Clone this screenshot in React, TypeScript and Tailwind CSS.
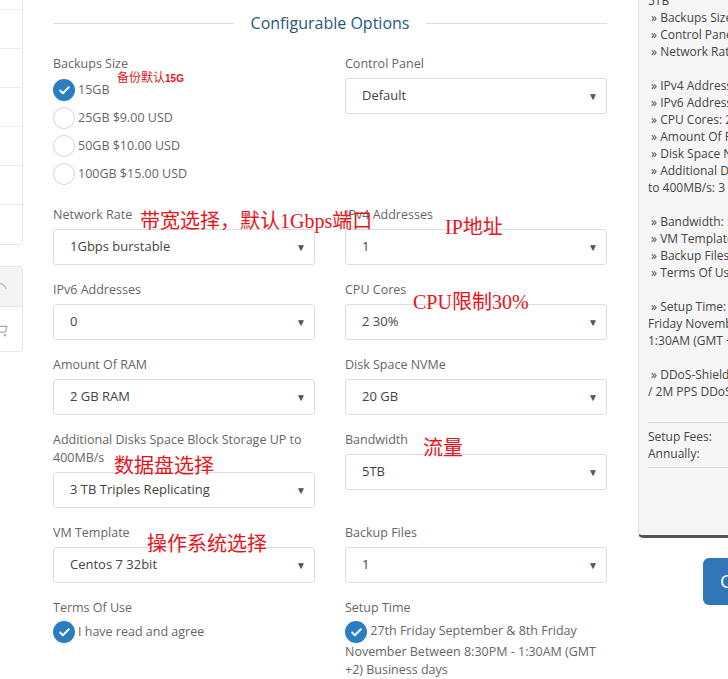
import { Check, ShoppingCart } from "lucide-react";

const Tick = () => (
  <span className="w-[22px] h-[22px] shrink-0 rounded-full bg-[#2a7dc0] inline-flex items-center justify-center align-middle">
    <Check size={13} strokeWidth={3.5} color="white" />
  </span>
);

const Radio = ({ checked, label }: { checked?: boolean; label: string }) => (
  <div className="h-7 flex items-center gap-[3px]">
    {checked ? (
      <Tick />
    ) : (
      <span className="w-[22px] h-[22px] rounded-full border border-[#d5d5d5] bg-white" />
    )}
    <span className="text-[12.5px] text-[#666]">{label}</span>
  </div>
);

const Field = ({ label, value }: { label: string; value: string }) => (
  <div>
    <div className="text-[12.5px] leading-[18px] text-[#666] mb-[5px]">{label}</div>
    <div className="h-9 border border-[#ddd] rounded-[3px] bg-white flex items-center justify-between pl-4 pr-[8px] text-[13px] text-[#444]">
      <span>{value}</span>
      <span className="text-[10px] text-[#555]">▼</span>
    </div>
  </div>
);

const Label = ({ children }: { children: React.ReactNode }) => (
  <div className="text-[12.5px] leading-[18px] text-[#666]">{children}</div>
);

const summary = [
  "5TB",
  "\u00a0» Backups Size: 15GB",
  "\u00a0» Control Panel: Default",
  "\u00a0» Network Rate: 1Gbps burstable",
  "",
  "\u00a0» IPv4 Addresses: 1",
  "\u00a0» IPv6 Addresses: 0",
  "\u00a0» CPU Cores: 2 30%",
  "\u00a0» Amount Of RAM: 2 GB RAM",
  "\u00a0» Disk Space NVMe: 20 GB",
  "\u00a0» Additional Disks Space Block Storage UP",
  "to 400MB/s: 3 TB Triples Replicating",
  "",
  "\u00a0» Bandwidth: 5TB",
  "\u00a0» VM Template: Centos 7 32bit",
  "\u00a0» Backup Files: 1",
  "\u00a0» Terms Of Use: I have read and agree",
  "",
  "\u00a0» Setup Time: 27th Friday September & 8th",
  "Friday November Between 8:30PM -",
  "1:30AM (GMT +2) Business days",
  "",
  "\u00a0» DDoS-Shield: 500 Mbps",
  "/ 2M PPS DDoS Protection",
];

const note = "absolute text-[#e8141b] font-['Liberation_Serif','Noto_Sans_CJK_SC',serif] text-[20px] leading-[20px] whitespace-nowrap";

export default function App() {
  return (
    <div className="relative w-full h-[679px] overflow-hidden bg-white flex font-['Open_Sans',sans-serif]">
      {/* sidebar, cut at the left edge */}
      <div className="w-[23px] shrink-0">
        <div className="-mt-[29px] border-r border-b border-[#e6e6e6] rounded-br-[4px]">
          {[0, 1, 2, 3, 4, 5].map((i) => (
            <div key={i} className="h-[39px] border-b border-[#ececec]" />
          ))}
          <div className="h-[39px]" />
        </div>
        <div className="mt-[21px] border border-l-0 border-[#e6e6e6] rounded-r-[4px] overflow-hidden">
          <div className="h-[40px] bg-[#f4f4f4] border-b border-[#e6e6e6] pt-[15px]">
            <svg width="12" height="12" viewBox="0 0 12 12" className="-ml-[4px]">
              <path d="M2 2 A6 6 0 0 1 10 7" fill="none" stroke="#c4c4c4" strokeWidth="1.5" />
            </svg>
          </div>
          <div className="h-[44px] flex items-center">
            <ShoppingCart size={15} color="#aaa" className="-ml-[7px]" />
          </div>
        </div>
      </div>

      {/* main */}
      <div className="w-[584px] shrink-0 pl-[30px] pt-[11px]">
        <div className="flex items-center h-6">
          <div className="flex-1 border-t border-[#dcdcdc]" />
          <h2 className="mx-[17px] text-[16px] text-[#245a78]">Configurable Options</h2>
          <div className="flex-1 border-t border-[#dcdcdc]" />
        </div>

        <div className="mt-[20px] grid grid-cols-2 gap-x-[30px] gap-y-4 items-start">
          <div className="pb-[2px]">
            <div className="text-[12.5px] leading-[18px] text-[#666] mb-[3px]">Backups Size</div>
            <Radio checked label="15GB" />
            <Radio label="25GB $9.00 USD" />
            <Radio label="50GB $10.00 USD" />
            <Radio label="100GB $15.00 USD" />
          </div>
          <Field label="Control Panel" value="Default" />

          <Field label="Network Rate" value="1Gbps burstable" />
          <Field label="IPv4 Addresses" value="1" />

          <Field label="IPv6 Addresses" value="0" />
          <Field label="CPU Cores" value="2 30%" />

          <Field label="Amount Of RAM" value="2 GB RAM" />
          <Field label="Disk Space NVMe" value="20 GB" />

          <Field label="Additional Disks Space Block Storage UP to 400MB/s" value="3 TB Triples Replicating" />
          <Field label="Bandwidth" value="5TB" />

          <Field label="VM Template" value="Centos 7 32bit" />
          <Field label="Backup Files" value="1" />

          <div>
            <Label>Terms Of Use</Label>
            <div className="mt-1 flex items-center gap-[3px]">
              <Tick />
              <span className="text-[12.5px] text-[#666]">I have read and agree</span>
            </div>
          </div>
          <div>
            <Label>Setup Time</Label>
            <div className="mt-[4px] text-[12.5px] leading-[18px] text-[#666]">
              <Tick /> 27th Friday September &amp; 8th Friday November Between 8:30PM - 1:30AM (GMT +2) Business days
            </div>
          </div>
        </div>
      </div>

      {/* order summary, cut at the right edge */}
      <div className="ml-[31px] w-[220px] shrink-0">
        <div className="-mt-[8px] h-[546px] bg-[#f6f6f6] border-l border-[#e2e2e2] border-b-[3px] border-b-[#555] rounded-bl-[5px] pl-[9px] text-[12px] leading-[17px] text-[#444]">
          {summary.map((line, i) => (
            <div key={i} className="h-[17px] whitespace-nowrap">{line}</div>
          ))}
          <div className="mt-[22px] border-t border-[#d4d4d4] pt-[5px] pb-[5px] border-b">
            <div>Setup Fees:</div>
            <div>Annually:</div>
          </div>
        </div>
        <div className="mt-[20px] ml-[65px] h-[47px] w-[150px] bg-[#2f77b6] rounded-[6px] text-white text-[19px] flex items-center pl-[17px]">
          Continue
        </div>
      </div>

      {/* red annotations laid over the form */}
      <div className="absolute left-[117px] top-[71px] text-[#e8141b] text-[12px] leading-[12px] whitespace-nowrap font-['Noto_Sans_CJK_SC',sans-serif]">
        备份默认<span className="text-[10px] font-bold font-['Liberation_Sans',sans-serif]">15G</span>
      </div>
      <div className={`${note} left-[140px] top-[211px]`}>带宽选择，默认1Gbps端口</div>
      <div className={`${note} left-[445px] top-[217px]`}>IP地址</div>
      <div className={`${note} left-[413px] top-[292px]`}>CPU限制30%</div>
      <div className={`${note} left-[423px] top-[438px]`}>流量</div>
      <div className={`${note} left-[114px] top-[456px]`}>数据盘选择</div>
      <div className={`${note} left-[147px] top-[534px]`}>操作系统选择</div>
    </div>
  );
}
